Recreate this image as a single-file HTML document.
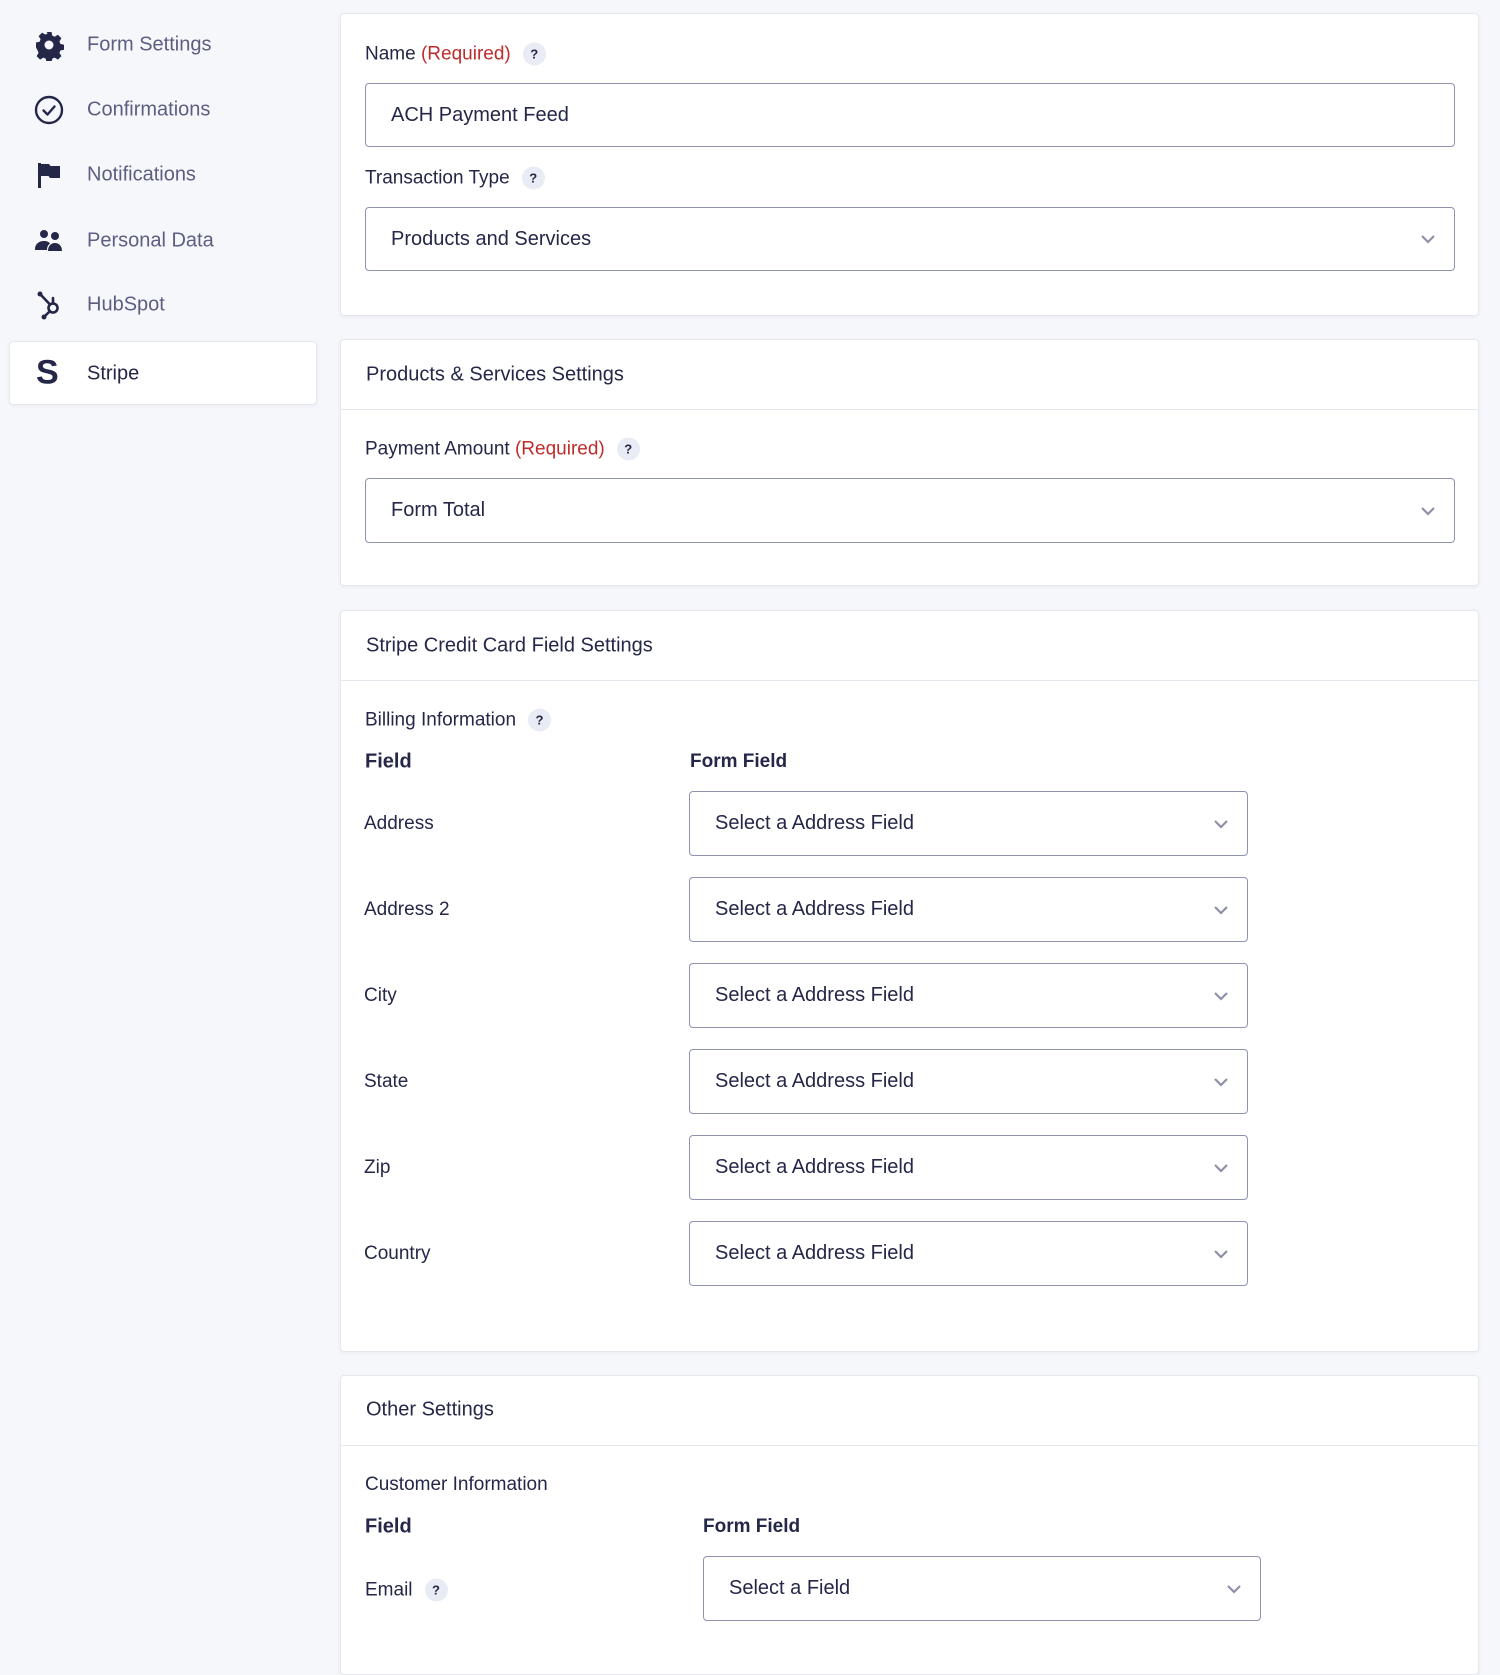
<!DOCTYPE html>
<html><head><meta charset="utf-8"><style>
*{box-sizing:border-box;margin:0;padding:0}
body{width:1500px;height:1633px;background:#f6f7fb;font-family:"Liberation Sans",sans-serif;color:#242748;position:relative;overflow:hidden}
.a{position:absolute}
.nav{position:absolute;left:87px;font-size:20px;color:#5b5e80;transform:translateY(-50%)}
.ic{position:absolute;left:33px;width:32px;height:32px;transform:translateY(-50%)}
.panel{position:absolute;left:340px;width:1139px;background:#fff;border:1px solid #e6e8f0;border-radius:4px;box-shadow:0 1px 3px rgba(30,30,60,.06)}
.lbl{position:absolute;font-size:19px;color:#242748;transform:translateY(-50%);white-space:nowrap}
.req{color:#c02b2b}
.q{display:inline-block;width:23px;height:23px;border-radius:50%;background:#e9ebf5;font-size:13px;font-weight:bold;text-align:center;line-height:23px;margin-left:12px;vertical-align:1px;color:#242748}
.inp{position:absolute;border:1px solid #9092b2;border-radius:4px;background:#fff;font-size:20px;padding-left:25px;display:flex;align-items:center;color:#242748}
.inp svg{position:absolute;right:18px;top:50%;margin-top:-5px}
.hdr{position:absolute;left:25px;font-size:20px;transform:translateY(-50%)}
.div{position:absolute;left:0;right:0;height:1px;background:#e6e8f0}
.b{font-weight:bold}
</style></head><body>

<!-- sidebar -->
<div class="a" style="left:9px;top:341px;width:308px;height:64px;background:#fff;border:1px solid #e6e8f0;border-radius:4px;box-shadow:0 1px 3px rgba(30,30,60,.06)"></div>
<svg class="ic" style="top:45px" viewBox="0 0 32 32"><path fill="#242748" d="M13.5 3h5l.8 3.6 2.4 1.2 3.2-2 3.5 3.5-2 3.2 1 2.4 3.6.8v5l-3.6.8-1 2.4 2 3.2-3.5 3.5-3.2-2-2.4 1-.8 3.6h-5l-.8-3.6-2.4-1-3.2 2-3.5-3.5 2-3.2-1-2.4L3 18.5v-5l3.6-.8 1-2.4-2-3.2 3.5-3.5 3.2 2 2.4-1.2z"/><circle cx="16" cy="16" r="4.5" fill="#f6f7fb"/></svg>
<div class="nav" style="top:45px">Form Settings</div>
<svg class="ic" style="top:110px" viewBox="0 0 32 32"><circle cx="16" cy="16" r="13" fill="none" stroke="#242748" stroke-width="2.4"/><path d="M10.5 16.5l4 4 7-8" fill="none" stroke="#242748" stroke-width="2.4" stroke-linecap="round" stroke-linejoin="round"/></svg>
<div class="nav" style="top:110px">Confirmations</div>
<svg class="ic" style="top:175px" viewBox="0 0 32 32"><path fill="#242748" d="M5 4h3v25H5z M8 5h8l1.5 2H27v12H17l-1.5-2H8z"/></svg>
<div class="nav" style="top:175px">Notifications</div>
<svg class="ic" style="top:241px" viewBox="0 0 32 32"><circle cx="11" cy="9" r="4" fill="#242748"/><circle cx="22" cy="11" r="4" fill="#242748"/><path fill="#242748" d="M2 24c0-5 4-8 9-8 3 0 5 1 6 2.5-2 1.5-3 3.5-3 6.5H2z M15 26c0-5 3-8 7-8s7 3 7 8z"/></svg>
<div class="nav" style="top:241px">Personal Data</div>
<svg class="ic" style="top:305px" viewBox="0 0 32 32"><g stroke="#242748" stroke-width="2.6" fill="none" stroke-linecap="round"><circle cx="20" cy="19" r="4.5"/><path d="M8 6l9 9.5 M17 22l-5 5 M20 14.5V9"/></g><circle cx="7" cy="5" r="2.5" fill="#242748"/><circle cx="11" cy="28" r="2.5" fill="#242748"/></svg>
<div class="nav" style="top:305px">HubSpot</div>
<div class="a" style="left:36px;top:373px;transform:translateY(-50%);font-size:34px;font-weight:bold;color:#242748">S</div>
<div class="nav" style="top:374px;color:#242748">Stripe</div>

<!-- panel 1 -->
<div class="panel" style="top:13px;height:303px">
  <div class="lbl" style="left:24px;top:40px">Name <span class="req">(Required)</span><span class="q">?</span></div>
  <div class="inp" style="left:24px;top:69px;width:1090px;height:64px">ACH Payment Feed</div>
  <div class="lbl" style="left:24px;top:164px">Transaction Type<span class="q">?</span></div>
  <div class="inp" style="left:24px;top:193px;width:1090px;height:64px">Products and Services<svg width="16" height="10" viewBox="0 0 16 10"><path d="M2 2l6 6 6-6" fill="none" stroke="#8e90a8" stroke-width="2.2"/></svg></div>
</div>

<!-- panel 2 -->
<div class="panel" style="top:339px;height:247px">
  <div class="hdr" style="top:35px">Products &amp; Services Settings</div>
  <div class="div" style="top:69px"></div>
  <div class="lbl" style="left:24px;top:109px">Payment Amount <span class="req">(Required)</span><span class="q">?</span></div>
  <div class="inp" style="left:24px;top:138px;width:1090px;height:65px">Form Total<svg width="16" height="10" viewBox="0 0 16 10"><path d="M2 2l6 6 6-6" fill="none" stroke="#8e90a8" stroke-width="2.2"/></svg></div>
</div>

<!-- panel 3 -->
<div class="panel" style="top:610px;height:742px">
  <div class="hdr" style="top:35px">Stripe Credit Card Field Settings</div>
  <div class="div" style="top:69px"></div>
  <div class="lbl" style="left:24px;top:109px">Billing Information<span class="q">?</span></div>
  <div class="lbl b" style="left:24px;top:151px;font-size:20px">Field</div>
  <div class="lbl b" style="left:349px;top:151px">Form Field</div>
</div>

<!-- panel 4 -->
<div class="panel" style="top:1375px;height:300px">
  <div class="hdr" style="top:34px">Other Settings</div>
  <div class="div" style="top:69px"></div>
  <div class="lbl" style="left:24px;top:109px">Customer Information</div>
  <div class="lbl b" style="left:24px;top:151px;font-size:20px">Field</div>
  <div class="lbl b" style="left:362px;top:151px">Form Field</div>
  <div class="lbl" style="left:24px;top:214px">Email<span class="q">?</span></div>
  <div class="inp" style="left:362px;top:180px;width:558px;height:65px">Select a Field<svg width="16" height="10" viewBox="0 0 16 10"><path d="M2 2l6 6 6-6" fill="none" stroke="#8e90a8" stroke-width="2.2"/></svg></div>
</div>

<!-- billing rows -->
<div class="lbl" style="left:364px;top:824px">Address</div>
<div class="inp" style="left:689px;top:791px;width:559px;height:65px">Select a Address Field<svg width="16" height="10" viewBox="0 0 16 10"><path d="M2 2l6 6 6-6" fill="none" stroke="#8e90a8" stroke-width="2.2"/></svg></div>
<div class="lbl" style="left:364px;top:910px">Address 2</div>
<div class="inp" style="left:689px;top:877px;width:559px;height:65px">Select a Address Field<svg width="16" height="10" viewBox="0 0 16 10"><path d="M2 2l6 6 6-6" fill="none" stroke="#8e90a8" stroke-width="2.2"/></svg></div>
<div class="lbl" style="left:364px;top:996px">City</div>
<div class="inp" style="left:689px;top:963px;width:559px;height:65px">Select a Address Field<svg width="16" height="10" viewBox="0 0 16 10"><path d="M2 2l6 6 6-6" fill="none" stroke="#8e90a8" stroke-width="2.2"/></svg></div>
<div class="lbl" style="left:364px;top:1082px">State</div>
<div class="inp" style="left:689px;top:1049px;width:559px;height:65px">Select a Address Field<svg width="16" height="10" viewBox="0 0 16 10"><path d="M2 2l6 6 6-6" fill="none" stroke="#8e90a8" stroke-width="2.2"/></svg></div>
<div class="lbl" style="left:364px;top:1168px">Zip</div>
<div class="inp" style="left:689px;top:1135px;width:559px;height:65px">Select a Address Field<svg width="16" height="10" viewBox="0 0 16 10"><path d="M2 2l6 6 6-6" fill="none" stroke="#8e90a8" stroke-width="2.2"/></svg></div>
<div class="lbl" style="left:364px;top:1254px">Country</div>
<div class="inp" style="left:689px;top:1221px;width:559px;height:65px">Select a Address Field<svg width="16" height="10" viewBox="0 0 16 10"><path d="M2 2l6 6 6-6" fill="none" stroke="#8e90a8" stroke-width="2.2"/></svg></div>

</body></html>
